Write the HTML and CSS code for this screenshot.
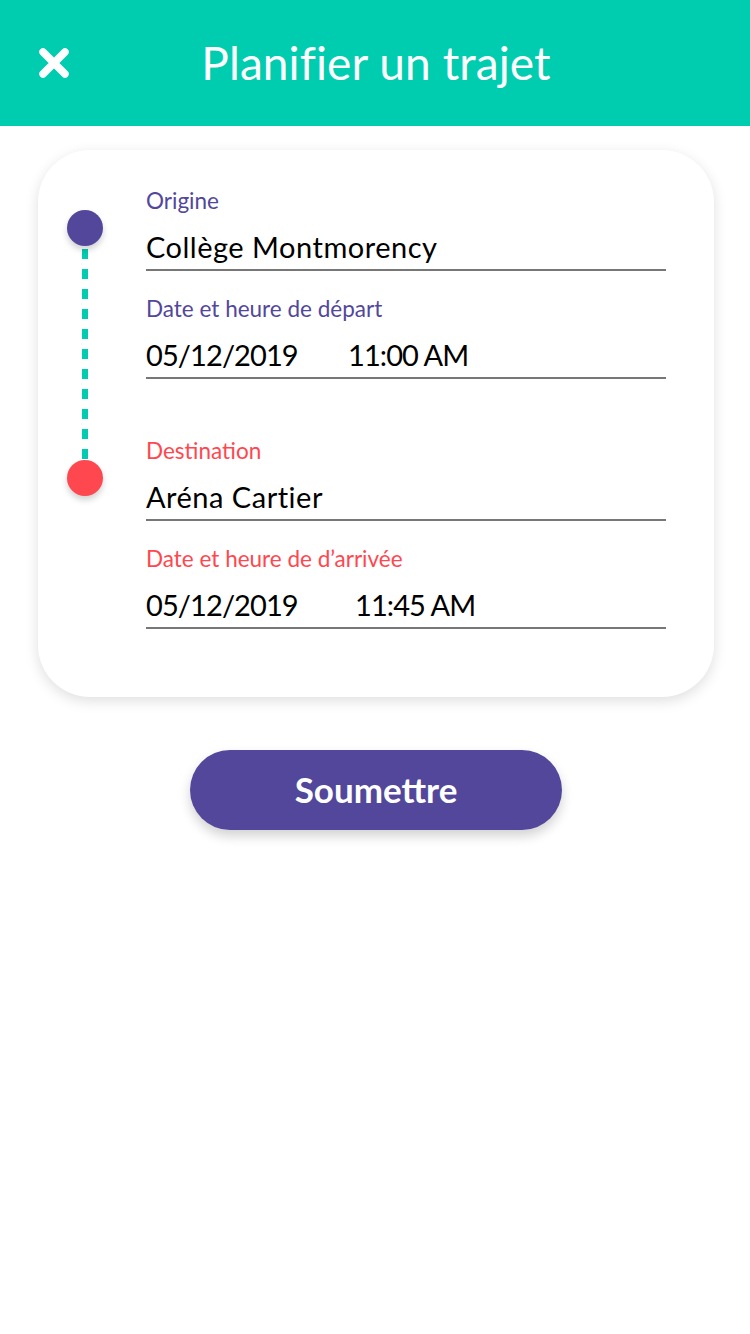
FILE: index.html
```html
<!DOCTYPE html>
<html lang="fr">
<head>
<meta charset="utf-8">
<title>Planifier un trajet</title>
<link rel="stylesheet" href="styles.css">
</head>
<body>
<header class="topbar">
  <button class="close" aria-label="Fermer">
    <svg viewBox="0 0 32 32" width="32" height="32"><path d="M5 5 L27 27 M27 5 L5 27" stroke="#fff" stroke-width="7.5" stroke-linecap="round"/></svg>
  </button>
  <h1 class="title">Planifier un trajet</h1>
</header>
<main class="content">
  <section class="card">
    <div class="track">
      <span class="dot dot-origin"></span>
      <span class="dash"></span>
      <span class="dot dot-dest"></span>
    </div>
    <div class="fields">
      <div class="field">
        <div class="label label-origin">Origine</div>
        <div class="value value-text">Collège Montmorency</div>
      </div>
      <div class="field field-next">
        <div class="label label-origin">Date et heure de départ</div>
        <div class="value"><span class="date">05/12/2019</span><span class="time">11:00 AM</span></div>
      </div>
      <div class="field field-group">
        <div class="label label-dest">Destination</div>
        <div class="value value-text">Aréna Cartier</div>
      </div>
      <div class="field field-next">
        <div class="label label-dest">Date et heure de d’arrivée</div>
        <div class="value"><span class="date">05/12/2019</span><span class="time time-wide">11:45 AM</span></div>
      </div>
    </div>
  </section>
  <button class="submit">Soumettre</button>
</main>
</body>
</html>
```
FILE: styles.css
```css
* { box-sizing: border-box; }
html, body { margin: 0; padding: 0; background: #fff; }
body {
  width: 750px;
  min-height: 1334px;
  font-family: "Lato", "Open Sans", "Liberation Sans", sans-serif;
  color: #000;
}
.topbar {
  height: 126px;
  background: #00CDB0;
  display: flex;
  align-items: center;
  justify-content: center;
  position: relative;
}
.close {
  position: absolute;
  left: 38px;
  top: 47px;
  width: 32px;
  height: 32px;
  padding: 0;
  border: 0;
  background: none;
  display: flex;
}
.title {
  margin: 0;
  font-weight: 400;
  font-size: 46px;
  color: #fff;
  letter-spacing: 0.1px;
  padding-left: 2px;
  padding-bottom: 2px;
}
.content {
  display: flex;
  flex-direction: column;
  align-items: center;
  padding-top: 24px;
  padding-left: 2px;
}
.card {
  width: 676px;
  background: #fff;
  border-radius: 52px;
  box-shadow: 0 4px 14px rgba(0,0,0,0.13);
  display: flex;
  padding: 37px 48px 68px 0;
}
.track {
  width: 108px;
  padding-left: 29px;
  padding-top: 23px;
  display: flex;
  flex-direction: column;
}
.dot {
  width: 36px;
  height: 36px;
  border-radius: 50%;
  box-shadow: 0 4px 6px rgba(0,0,0,0.18);
  position: relative;
  z-index: 1;
}
.dot-origin { background: #52479B; }
.dot-dest { background: #FF474F; }
.dash {
  width: 6px;
  height: 214px;
  margin-left: 15px;
  background: repeating-linear-gradient(to bottom, #00CDB0 0 10px, transparent 10px 20px);
  background-position: 0 3px;
}
.fields {
  flex: 1;
  display: flex;
  flex-direction: column;
}
.label {
  font-size: 22.5px;
  line-height: 28px;
}
.label-origin { color: #52479B; }
.label-dest { color: #FF474F; }
.value {
  margin-top: 14px;
  font-size: 29px;
  line-height: 36px;
  padding-bottom: 4px;
  border-bottom: 2px solid #777;
  display: flex;
  white-space: nowrap;
}
.value-text { letter-spacing: 0.5px; }
.field-next { margin-top: 24px; }
.field-group { margin-top: 58px; }
.date { width: 150px; letter-spacing: -0.9px; }
.time { margin-left: 52px; letter-spacing: -0.9px; }
.time-wide { margin-left: 59px; }
.submit {
  margin-top: 53px;
  width: 372px;
  height: 80px;
  border: 0;
  border-radius: 40px;
  background: #52479B;
  color: #fff;
  font-family: "Lato", "Open Sans", "Liberation Sans", sans-serif;
  font-weight: 700;
  font-size: 35px;
  box-shadow: 0 6px 12px rgba(0,0,0,0.18);
  padding: 0 0 2px;
}
```
